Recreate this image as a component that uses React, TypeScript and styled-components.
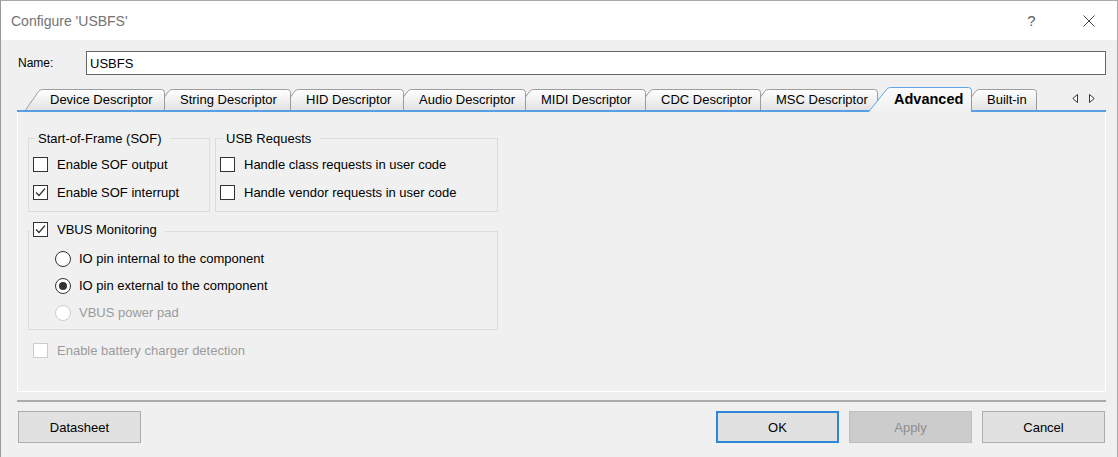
import React from "react";
import styled, { createGlobalStyle } from "styled-components";

const GlobalStyle = createGlobalStyle`
  html, body { margin: 0; padding: 0; background: #f0f0f0; overflow: hidden; }
  body { font-family: "Liberation Sans", Arial, sans-serif; }
  * { box-sizing: border-box; }
`;

const Window = styled.div`
  width: 1118px;
  height: 457px;
  display: flex;
  flex-direction: column;
  background: #f0f0f0;
  border-top: 1px solid #a9a9a9;
  border-left: 1px solid #9a9a9a;
  border-right: 1px solid #a9a9a9;
`;

const TitleBar = styled.div`
  height: 39px;
  flex: none;
  display: flex;
  align-items: center;
  background: #ffffff;
  padding-left: 10px;
`;

const TitleText = styled.span`
  font-size: 14px;
  color: #737373;
  flex: 1;
`;

const CaptionButton = styled.div`
  width: 57px;
  height: 39px;
  display: flex;
  align-items: center;
  justify-content: center;
  font-size: 15px;
  color: #606060;
`;

const Body = styled.div`
  flex: 1;
  display: flex;
  flex-direction: column;
  padding: 0 11px 0 16px;
`;

const NameRow = styled.div`
  display: flex;
  align-items: center;
  height: 24px;
  margin-top: 11px;
`;

const NameLabel = styled.label`
  width: 69px;
  padding-left: 1px;
  font-size: 12px;
  color: #000;
`;

const NameInput = styled.div`
  flex: 1;
  height: 24px;
  border: 1px solid #666666;
  background: #ffffff;
  display: flex;
  align-items: center;
  padding-left: 3px;
  font-size: 13px;
  color: #000;
`;

const TabStrip = styled.div`
  margin-top: 12px;
  height: 25px;
  display: flex;
  align-items: flex-end;
  padding-left: 8px;
  border-bottom: 2px solid #55a0e6;
`;

const TabItem = styled.div<{ $w: number; $selected?: boolean; $z: number; $first?: boolean }>`
  position: relative;
  flex: none;
  width: ${(p) => p.$w}px;
  height: ${(p) => (p.$selected ? 25 : 21)}px;
  margin-left: ${(p) => (p.$first ? 0 : -10)}px;
  margin-bottom: ${(p) => (p.$selected ? -2 : 0)}px;
  z-index: ${(p) => p.$z};
  display: flex;
  align-items: center;
  padding-left: ${(p) => (p.$selected ? 26 : 25)}px;
  padding-bottom: ${(p) => (p.$selected ? 1 : 0)}px;
`;

const TabSvg = styled.svg`
  position: absolute;
  left: 0;
  top: 0;
  z-index: 0;
`;

const TabLabel = styled.span<{ $selected?: boolean }>`
  position: relative;
  z-index: 1;
  white-space: nowrap;
  font-size: ${(p) => (p.$selected ? 14.5 : 13)}px;
  font-weight: ${(p) => (p.$selected ? 700 : 400)};
  color: #000;
`;

const ScrollArrows = styled.div`
  margin-left: auto;
  margin-right: 11px;
  height: 23px;
  display: flex;
  align-items: center;
  gap: 11px;
  padding-bottom: 1px;
`;

const Panel = styled.div`
  height: 280px;
  border: 1px solid #ffffff;
  border-top: none;
  padding: 26px 10px 0 10px;
  display: flex;
  flex-direction: column;
`;

const GroupRow = styled.div`
  display: flex;
  gap: 5px;
`;

const Group = styled.div<{ $w: number; $h: number; $mt?: number }>`
  position: relative;
  width: ${(p) => p.$w}px;
  height: ${(p) => p.$h}px;
  margin-top: ${(p) => p.$mt ?? 0}px;
  border: 1px solid #dcdcdc;
  padding: ${(p) => (p.$mt ? "13px 0 0 26px" : "11px 0 0 4px")};
  display: flex;
  flex-direction: column;
`;

const GroupTitle = styled.div<{ $left: number; $top: number }>`
  position: absolute;
  left: ${(p) => p.$left}px;
  top: ${(p) => p.$top}px;
  padding: 0 8px 0 3px;
  background: #f0f0f0;
  font-size: 13px;
  line-height: 16px;
  color: #000;
  display: flex;
  align-items: center;
  white-space: nowrap;
`;

const OptionRow = styled.label<{ $h: number; $gap: number; $disabled?: boolean; $ml?: number; $mt?: number }>`
  display: flex;
  align-items: center;
  height: ${(p) => p.$h}px;
  gap: ${(p) => p.$gap}px;
  margin-left: ${(p) => p.$ml ?? 0}px;
  margin-top: ${(p) => p.$mt ?? 0}px;
  font-size: 13px;
  color: ${(p) => (p.$disabled ? "#9b9b9b" : "#000")};
  white-space: nowrap;
`;

const CheckBox = styled.span<{ $disabled?: boolean }>`
  width: 15px;
  height: 15px;
  flex: none;
  border: 1px solid ${(p) => (p.$disabled ? "#cccccc" : "#333333")};
  background: #ffffff;
  display: flex;
  align-items: center;
  justify-content: center;
`;

const RadioCircle = styled.span<{ $disabled?: boolean }>`
  width: 16px;
  height: 16px;
  flex: none;
  border-radius: 50%;
  border: 1px solid ${(p) => (p.$disabled ? "#cccccc" : "#333333")};
  background: #ffffff;
  display: flex;
  align-items: center;
  justify-content: center;
`;

const RadioDot = styled.span`
  width: 8px;
  height: 8px;
  border-radius: 50%;
  background: #333333;
`;

const Separator = styled.div`
  height: 2px;
  margin-top: 8px;
  background: #ababab;
`;

const Footer = styled.div`
  margin-top: 9px;
  display: flex;
  gap: 10px;
  padding: 0 1px;
`;

const Spacer = styled.div`
  flex: 1;
`;

const Button = styled.div<{ $variant?: "default" | "disabled" }>`
  width: 123px;
  height: 32px;
  display: flex;
  align-items: center;
  justify-content: center;
  font-size: 13px;
  color: ${(p) => (p.$variant === "disabled" ? "#8e8e8e" : "#000")};
  background: ${(p) => (p.$variant === "disabled" ? "#cccccc" : "#e1e1e1")};
  border: ${(p) =>
    p.$variant === "default" ? "2px solid #2f86d8" : p.$variant === "disabled" ? "1px solid #bfbfbf" : "1px solid #adadad"};
`;

const Check = ({ checked, disabled }: { checked?: boolean; disabled?: boolean }) => (
  <CheckBox $disabled={disabled}>
    {checked && (
      <svg width="13" height="13" viewBox="0 0 13 13">
        <polyline points="2,6.5 5,9.5 11,2.5" fill="none" stroke="#333" strokeWidth="1.2" />
      </svg>
    )}
  </CheckBox>
);

const Radio = ({ checked, disabled }: { checked?: boolean; disabled?: boolean }) => (
  <RadioCircle $disabled={disabled}>{checked && <RadioDot />}</RadioCircle>
);

const TabShape = ({ w, h, selected, id }: { w: number; h: number; selected?: boolean; id: string }) => {
  const s = selected ? 20 : 15;
  const outline = `M0.5,${h} L${s - 1.5},2.5 Q${s},0.5 ${s + 2.5},0.5 L${w - 3.5},0.5 Q${w - 0.5},0.5 ${w - 0.5},3.5 L${w - 0.5},${h}`;
  return (
    <TabSvg width={w} height={h}>
      <defs>
        <linearGradient id={id} x1="0" y1="0" x2="0" y2="1">
          <stop offset="0" stopColor={selected ? "#fbfbfb" : "#ffffff"} />
          <stop offset="1" stopColor={selected ? "#f0f0f0" : "#e3e3e3"} />
        </linearGradient>
      </defs>
      <path d={outline + " Z"} fill={`url(#${id})`} />
      <path d={outline} fill="none" stroke={selected ? "#5ea6e6" : "#9c9c9c"} strokeWidth="1" />
    </TabSvg>
  );
};

const tabs = [
  { label: "Device Descriptor", width: 140 },
  { label: "String Descriptor", width: 136 },
  { label: "HID Descriptor", width: 123 },
  { label: "Audio Descriptor", width: 132 },
  { label: "MIDI Descriptor", width: 130 },
  { label: "CDC Descriptor", width: 125 },
  { label: "MSC Descriptor", width: 127 },
  { label: "Advanced", width: 104, selected: true },
  { label: "Built-in", width: 75 },
];

export default function App() {
  return (
    <>
      <GlobalStyle />
      <Window>
        <TitleBar>
          <TitleText>Configure 'USBFS'</TitleText>
          <CaptionButton>?</CaptionButton>
          <CaptionButton>
            <svg width="12" height="12" viewBox="0 0 12 12">
              <path d="M0.5,0.5 L11.5,11.5 M11.5,0.5 L0.5,11.5" stroke="#444" strokeWidth="1" />
            </svg>
          </CaptionButton>
        </TitleBar>
        <Body>
          <NameRow>
            <NameLabel>Name:</NameLabel>
            <NameInput>USBFS</NameInput>
          </NameRow>
          <TabStrip>
            {tabs.map((t, i) => (
              <TabItem key={t.label} $w={t.width} $selected={t.selected} $first={i === 0} $z={t.selected ? 50 : 20 - i}>
                <TabShape w={t.width} h={t.selected ? 25 : 21} selected={t.selected} id={`tabgrad${i}`} />
                <TabLabel $selected={t.selected}>{t.label}</TabLabel>
              </TabItem>
            ))}
            <ScrollArrows>
              <svg width="6" height="9" viewBox="0 0 6 9">
                <polygon points="5.5,0.5 0.8,4.5 5.5,8.5" fill="#fff" stroke="#333" strokeWidth="1" />
              </svg>
              <svg width="6" height="9" viewBox="0 0 6 9">
                <polygon points="0.5,0.5 5.2,4.5 0.5,8.5" fill="#fff" stroke="#333" strokeWidth="1" />
              </svg>
            </ScrollArrows>
          </TabStrip>
          <Panel>
            <GroupRow>
              <Group $w={182} $h={74}>
                <GroupTitle $left={6} $top={-8}>Start-of-Frame (SOF)</GroupTitle>
                <OptionRow $h={28} $gap={9}>
                  <Check />
                  Enable SOF output
                </OptionRow>
                <OptionRow $h={28} $gap={9}>
                  <Check checked />
                  Enable SOF interrupt
                </OptionRow>
              </Group>
              <Group $w={283} $h={74}>
                <GroupTitle $left={7} $top={-8}>USB Requests</GroupTitle>
                <OptionRow $h={28} $gap={9}>
                  <Check />
                  Handle class requests in user code
                </OptionRow>
                <OptionRow $h={28} $gap={9}>
                  <Check />
                  Handle vendor requests in user code
                </OptionRow>
              </Group>
            </GroupRow>
            <Group $w={470} $h={99} $mt={19}>
              <GroupTitle $left={1} $top={-11}>
                <OptionRow $h={17} $gap={9}>
                  <Check checked />
                  VBUS Monitoring
                </OptionRow>
              </GroupTitle>
              <OptionRow $h={27} $gap={8}>
                <Radio />
                IO pin internal to the component
              </OptionRow>
              <OptionRow $h={27} $gap={8}>
                <Radio checked />
                IO pin external to the component
              </OptionRow>
              <OptionRow $h={27} $gap={8} $disabled>
                <Radio disabled />
                VBUS power pad
              </OptionRow>
            </Group>
            <OptionRow $h={28} $gap={9} $ml={5} $mt={6} $disabled>
              <Check disabled />
              Enable battery charger detection
            </OptionRow>
          </Panel>
          <Separator />
          <Footer>
            <Button>Datasheet</Button>
            <Spacer />
            <Button $variant="default">OK</Button>
            <Button $variant="disabled">Apply</Button>
            <Button>Cancel</Button>
          </Footer>
        </Body>
      </Window>
    </>
  );
}
